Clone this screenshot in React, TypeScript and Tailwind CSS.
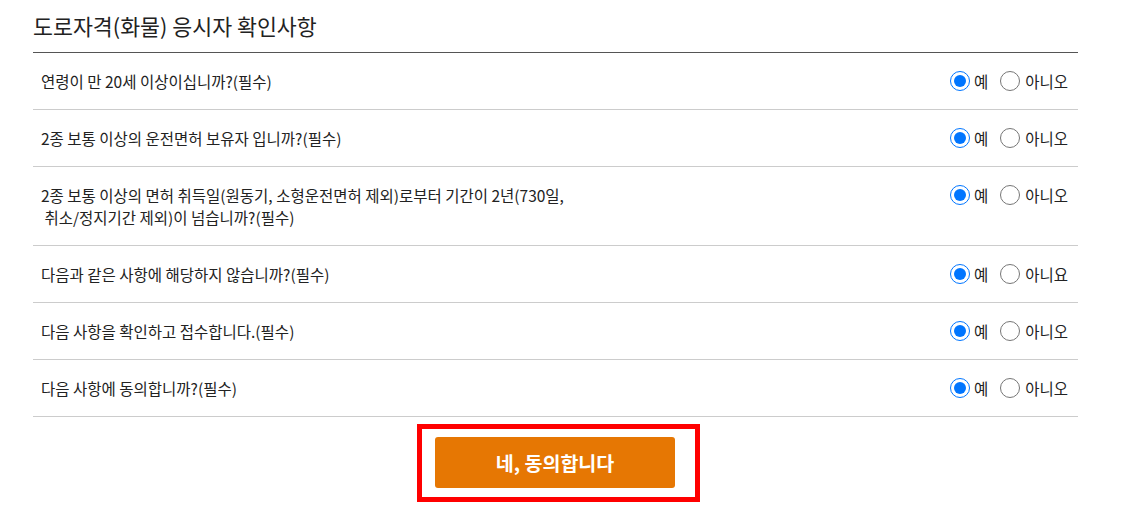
import { useState } from "react";

interface Question {
  id: string;
  label: string[];
  noLabel: string;
}

const questions: Question[] = [
  { id: "q1", label: ["연령이 만 20세 이상이십니까?(필수)"], noLabel: "아니오" },
  { id: "q2", label: ["2종 보통 이상의 운전면허 보유자 입니까?(필수)"], noLabel: "아니오" },
  {
    id: "q3",
    label: [
      "2종 보통 이상의 면허 취득일(원동기, 소형운전면허 제외)로부터 기간이 2년(730일,",
      " 취소/정지기간 제외)이 넘습니까?(필수)",
    ],
    noLabel: "아니오",
  },
  { id: "q4", label: ["다음과 같은 사항에 해당하지 않습니까?(필수)"], noLabel: "아니요" },
  { id: "q5", label: ["다음 사항을 확인하고 접수합니다.(필수)"], noLabel: "아니오" },
  { id: "q6", label: ["다음 사항에 동의합니까?(필수)"], noLabel: "아니오" },
];

const App = () => {
  const [answers, setAnswers] = useState<Record<string, string>>(
    Object.fromEntries(questions.map((q) => [q.id, "Y"]))
  );

  return (
    <div
      className="bg-white w-[1130px] h-[513px] text-[#222]"
      style={{ fontFamily: '"Noto Sans CJK KR", "Noto Sans", sans-serif' }}
    >
      <div className="ml-[33px] w-[1045px]">
        <h2 className="h-[53px] pt-[10px] text-[21.7px] leading-[32px] font-normal text-[#222] border-b border-[#555]">
          도로자격(화물) 응시자 확인사항
        </h2>
        <ul>
          {questions.map((q) => (
            <li
              key={q.id}
              className="flex items-start justify-between pl-2 pr-[10px] py-[17px] border-b border-[#ccc]"
            >
              <div className="text-[15.5px] leading-[22px] whitespace-pre">
                {q.label.map((line, i) => (
                  <div key={i}>{line}</div>
                ))}
              </div>
              <div className="flex items-center h-[22px] text-[15.5px] leading-[22px]">
                <label className="flex items-center">
                  <input
                    type="radio"
                    name={q.id}
                    checked={answers[q.id] === "Y"}
                    onChange={() => setAnswers({ ...answers, [q.id]: "Y" })}
                    className="w-[20px] h-[20px] m-0 mr-[4px]"
                  />
                  예
                </label>
                <label className="flex items-center ml-[12px]">
                  <input
                    type="radio"
                    name={q.id}
                    checked={answers[q.id] === "N"}
                    onChange={() => setAnswers({ ...answers, [q.id]: "N" })}
                    className="w-[20px] h-[20px] m-0 mr-[5px]"
                  />
                  {q.noLabel}
                </label>
              </div>
            </li>
          ))}
        </ul>
        <div className="flex justify-center mt-[7px]">
          <div className="ml-[6px] border-[5px] border-[#ff0000] pt-[8px] pb-[9px] pl-[13px] pr-[20px]">
            <button className="w-[240px] h-[51px] bg-[#e67703] rounded-[3px] text-white text-[19.5px] font-bold">
              네, 동의합니다
            </button>
          </div>
        </div>
      </div>
    </div>
  );
};

export default App;
